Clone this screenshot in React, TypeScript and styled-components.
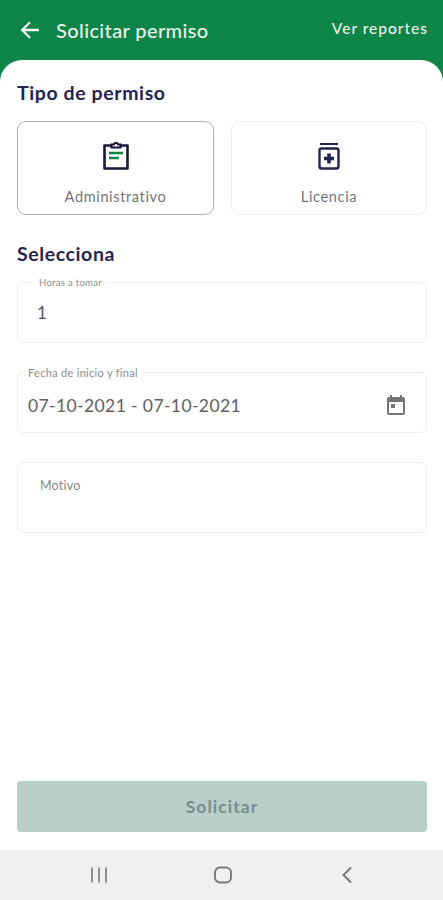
import React from 'react';
import styled, { createGlobalStyle } from 'styled-components';

const GlobalStyle = createGlobalStyle`
  html, body {
    margin: 0;
    padding: 0;
    background: #ffffff;
  }
  * {
    box-sizing: border-box;
  }
`;

const Screen = styled.div`
  width: 443px;
  height: 900px;
  display: flex;
  flex-direction: column;
  background: #0e8548;
  font-family: Lato, "Noto Sans", sans-serif;
  overflow: hidden;
`;

const Header = styled.header`
  height: 60px;
  flex: none;
  display: flex;
  align-items: center;
  padding: 0 15px 1px 20px;
  color: #e8f3ec;
`;

const BackButton = styled.span`
  display: flex;
  width: 20px;
  height: 20px;
  margin-right: 16px;
`;

const HeaderTitle = styled.span`
  font-size: 20px;
  font-weight: 500;
  letter-spacing: 0.38px;
  flex: 1;
`;

const HeaderLink = styled.span`
  font-size: 15.5px;
  font-weight: 500;
  letter-spacing: 1px;
  margin-bottom: 3px;
`;

const Sheet = styled.main`
  flex: 1;
  display: flex;
  flex-direction: column;
  background: #ffffff;
  border-radius: 22px 22px 0 0;
  padding: 21px 16px 18px 17px;
`;

const SectionTitle = styled.h2`
  margin: 0;
  height: 24px;
  line-height: 24px;
  font-size: 19.5px;
  font-weight: 700;
  letter-spacing: 0.6px;
  color: #23244f;
`;

const CardRow = styled.div`
  display: grid;
  grid-template-columns: 197px 196px;
  gap: 17px;
  margin: 16px 0 27px;
`;

const Card = styled.div<{ $selected?: boolean }>`
  height: 94px;
  display: flex;
  flex-direction: column;
  align-items: center;
  padding-top: 17px;
  border-radius: 9px;
  border: 1px solid ${(p) => (p.$selected ? '#aeb0b4' : '#eceded')};
  font-size: 14.5px;
  letter-spacing: 0.65px;
  color: #737479;
`;

const CardIcon = styled.svg`
  width: 32px;
  height: 32px;
  margin-bottom: 17px;
`;

const FieldList = styled.div`
  display: flex;
  flex-direction: column;
  gap: 29px;
  margin-top: 16px;
`;

const Field = styled.div<{ $tall?: boolean }>`
  position: relative;
  height: ${(p) => (p.$tall ? '71px' : '61px')};
  display: flex;
  align-items: ${(p) => (p.$tall ? 'flex-start' : 'center')};
  justify-content: space-between;
  border: 1px solid #eeeeef;
  border-radius: 6px;
`;

const FieldLegend = styled.span<{ $left: number; $size: number }>`
  position: absolute;
  top: -7px;
  left: ${(p) => p.$left}px;
  padding: 0 5px;
  background: #ffffff;
  line-height: 13px;
  font-size: ${(p) => p.$size}px;
  letter-spacing: 0.3px;
  color: #8b8c90;
`;

const HoursValue = styled.span`
  margin-left: 19px;
  font-size: 17px;
  color: #55565c;
`;

const DateValue = styled.span`
  margin: 5px 0 0 10px;
  font-size: 17.5px;
  letter-spacing: 0.4px;
  color: #5f6066;
`;

const CalendarIcon = styled.svg`
  width: 24px;
  height: 24px;
  margin: 4px 18px 0 0;
`;

const Placeholder = styled.span`
  margin: 15px 0 0 22px;
  font-size: 12.5px;
  letter-spacing: 0.2px;
  color: #85868a;
`;

const SubmitButton = styled.button`
  margin-top: auto;
  height: 51px;
  width: 100%;
  border: none;
  border-radius: 4px;
  background: #b9cfc9;
  font-family: inherit;
  font-size: 17.5px;
  font-weight: 700;
  letter-spacing: 1.05px;
  color: #7b8d8c;
`;

const NavBar = styled.nav`
  height: 50px;
  flex: none;
  display: flex;
  align-items: center;
  justify-content: space-between;
  padding: 0 86px 0 89px;
  background: #f0f0f0;
`;

const NavIcon = styled.svg<{ $weight?: number }>`
  width: 20px;
  height: 20px;
  fill: none;
  stroke: #77787a;
  stroke-width: ${(p) => p.$weight ?? 1.6};
`;

const App = () => {
  return (
    <>
      <GlobalStyle />
      <Screen>
        <Header>
          <BackButton>
            <svg viewBox="0 0 20 20" width="20" height="20" fill="none" stroke="#f2f8f4" strokeWidth="2.3">
              <path d="M19 10H2.5M10 2.2 2.2 10l7.8 7.8" />
            </svg>
          </BackButton>
          <HeaderTitle>Solicitar permiso</HeaderTitle>
          <HeaderLink>Ver reportes</HeaderLink>
        </Header>
        <Sheet>
          <SectionTitle>Tipo de permiso</SectionTitle>
          <CardRow>
            <Card $selected>
              <CardIcon viewBox="0 0 32 32" fill="none">
                <path
                  d="M12 6.5H4.5v23h23v-23H20"
                  stroke="#16173f"
                  strokeWidth="2.6"
                  strokeLinejoin="round"
                />
                <path d="M11.5 8.5V5.5h2.2a2.4 2.4 0 0 1 4.6 0h2.2v3z" stroke="#16173f" strokeWidth="2.2" />
                <path d="M9 14h14M9 19h10" stroke="#0e8548" strokeWidth="2.4" />
              </CardIcon>
              Administrativo
            </Card>
            <Card>
              <CardIcon viewBox="0 0 32 32" fill="none">
                <path d="M7 5h18" stroke="#23244f" strokeWidth="2" />
                <rect x="6.5" y="9.5" width="19" height="20" rx="2" stroke="#23244f" strokeWidth="2.4" />
                <path d="M16 14.5v10M11 19.5h10" stroke="#23244f" strokeWidth="3.6" />
              </CardIcon>
              Licencia
            </Card>
          </CardRow>
          <SectionTitle>Selecciona</SectionTitle>
          <FieldList>
            <Field>
              <FieldLegend $left={16} $size={9.5}>Horas a tomar</FieldLegend>
              <HoursValue>1</HoursValue>
            </Field>
            <Field>
              <FieldLegend $left={5} $size={11}>Fecha de inicio y final</FieldLegend>
              <DateValue>07-10-2021 - 07-10-2021</DateValue>
              <CalendarIcon viewBox="0 0 24 24" fill="#737478">
                <path d="M19 4h-1V2h-2v2H8V2H6v2H5a2 2 0 0 0-2 2v14a2 2 0 0 0 2 2h14a2 2 0 0 0 2-2V6a2 2 0 0 0-2-2zm0 16H5V9h14v11z" />
                <rect x="7" y="11" width="4" height="4" />
              </CalendarIcon>
            </Field>
            <Field $tall>
              <Placeholder>Motivo</Placeholder>
            </Field>
          </FieldList>
          <SubmitButton disabled>Solicitar</SubmitButton>
        </Sheet>
        <NavBar>
          <NavIcon viewBox="0 0 20 20">
            <path d="M3 2.5v15M10 2.5v15M17 2.5v15" />
          </NavIcon>
          <NavIcon viewBox="0 0 20 20" $weight={1.9}>
            <rect x="2" y="2.5" width="16" height="15" rx="5" />
          </NavIcon>
          <NavIcon viewBox="0 0 20 20" $weight={1.9}>
            <path d="M14 2.5 6.5 10l7.5 7.5" />
          </NavIcon>
        </NavBar>
      </Screen>
    </>
  );
};

export default App;
